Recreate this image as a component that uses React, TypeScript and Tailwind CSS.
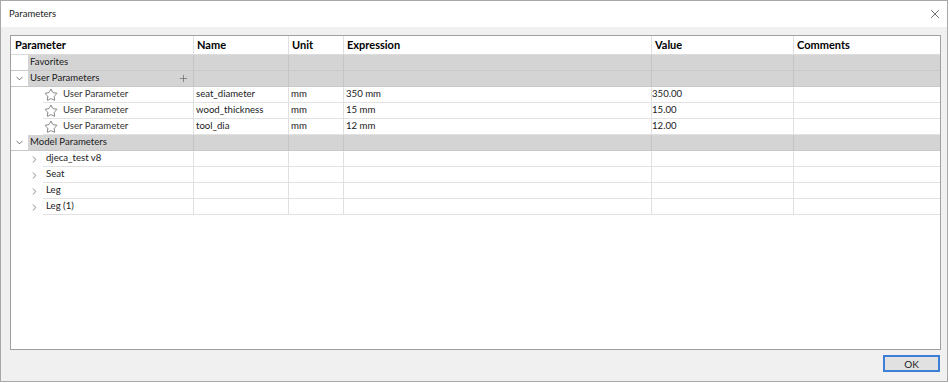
import { ChevronDown, ChevronRight, Plus, Star, X } from "lucide-react";

type UserRow = { name: string; unit: string; expr: string; value: string };

const userRows: UserRow[] = [
  { name: "seat_diameter", unit: "mm", expr: "350 mm", value: "350.00" },
  { name: "wood_thickness", unit: "mm", expr: "15 mm", value: "15.00" },
  { name: "tool_dia", unit: "mm", expr: "12 mm", value: "12.00" },
];

const models = ["djeca_test v8", "Seat", "Leg", "Leg (1)"];

const cols = "grid grid-cols-[95px_55px_308px_142px_1fr]";

function GrayCells() {
  return (
    <div className={`${cols} flex-1 bg-[#d4d4d4]`}>
      <div className="border-l border-[#c4c4c4]" />
      <div className="border-l border-[#c4c4c4]" />
      <div className="border-l border-[#c4c4c4]" />
      <div className="border-l border-[#c4c4c4]" />
      <div className="border-l border-[#c4c4c4]" />
    </div>
  );
}

function Section({ label, chevron, plus }: { label: string; chevron?: boolean; plus?: boolean }) {
  return (
    <div className="flex h-4 border-b border-[#c8c8c8]">
      <div className="w-[17px] flex items-center justify-center bg-white">
        {chevron && <ChevronDown size={11} strokeWidth={1.6} className="text-[#444]" />}
      </div>
      <div className="w-[165px] bg-[#d4d4d4] flex items-center justify-between pl-[2px] pr-[4px]">
        <span>{label}</span>
        {plus && <Plus size={11} strokeWidth={1.3} className="text-[#555]" />}
      </div>
      <GrayCells />
    </div>
  );
}

export default function App() {
  return (
    <div className="w-[950px] h-[383px] bg-white font-['Lato','Noto_Sans',sans-serif] text-[9.6px] text-[#1a1a1a]">
      <div className="w-[948px] h-[382px] border border-[#a8a8a8] flex flex-col bg-[#f0f0f0]">
        <div className="h-[27px] bg-white flex items-center justify-between pl-[8px] pr-[5px]">
          <span className="text-[9.5px] text-[#222]">Parameters</span>
          <X size={14} strokeWidth={1.2} className="text-[#333]" />
        </div>
        <div className="flex-1 flex flex-col pl-[9px] pr-[6px] pt-[8px] pb-[9px]">
          <div className="h-[315px] bg-white border border-[#a0a0a0] flex flex-col">
            <div className="flex h-[19px] border-b border-[#dcdcdc] font-bold text-[11px] text-black">
              <div className="w-[182px] pl-[4px] flex items-center">Parameter</div>
              <div className={`${cols} flex-1`}>
                <div className="border-l border-[#e0e0e0] pl-[3px] flex items-center">Name</div>
                <div className="border-l border-[#e0e0e0] pl-[3px] flex items-center">Unit</div>
                <div className="border-l border-[#e0e0e0] pl-[3px] flex items-center">Expression</div>
                <div className="border-l border-[#e0e0e0] pl-[3px] flex items-center">Value</div>
                <div className="border-l border-[#e0e0e0] pl-[3px] flex items-center">Comments</div>
              </div>
            </div>
            <Section label="Favorites" />
            <Section label="User Parameters" chevron plus />
            {userRows.map((r) => (
              <div key={r.name} className="flex h-4">
                <div className="w-[32px]" />
                <div className="flex flex-1 border-b border-[#e2e2e2]">
                  <div className="w-[150px] flex items-center gap-[5px] pl-[1px]">
                    <Star size={14} strokeWidth={1.1} className="text-[#444]" />
                    <span className="text-[#333]">User Parameter</span>
                  </div>
                  <div className={`${cols} flex-1`}>
                    <div className="border-l border-[#e0e0e0] pl-[2px] flex items-center">{r.name}</div>
                    <div className="border-l border-[#e0e0e0] pl-[2px] flex items-center">{r.unit}</div>
                    <div className="border-l border-[#e0e0e0] pl-[2px] flex items-center">{r.expr}</div>
                    <div className="border-l border-[#e0e0e0] flex items-center">{r.value}</div>
                    <div className="border-l border-[#e0e0e0]" />
                  </div>
                </div>
              </div>
            ))}
            <Section label="Model Parameters" chevron />
            {models.map((m) => (
              <div key={m} className="flex h-4">
                <div className="w-[32px] flex items-center justify-end pr-[3px]">
                  <ChevronRight size={11} strokeWidth={1.5} className="text-[#555]" />
                </div>
                <div className="flex flex-1 border-b border-[#e2e2e2]">
                  <div className="w-[150px] flex items-center pl-[3px]">{m}</div>
                  <div className={`${cols} flex-1`}>
                    <div className="border-l border-[#e0e0e0]" />
                    <div className="border-l border-[#e0e0e0]" />
                    <div className="border-l border-[#e0e0e0]" />
                    <div className="border-l border-[#e0e0e0]" />
                    <div className="border-l border-[#e0e0e0]" />
                  </div>
                </div>
              </div>
            ))}
          </div>
          <div className="flex justify-end mt-[5px] pr-[1px]">
            <button className="w-[57px] h-[17px] bg-[#e1e1e1] border-2 border-[#3c7fd6] text-[10px] leading-none text-[#222]">
              OK
            </button>
          </div>
        </div>
      </div>
    </div>
  );
}
